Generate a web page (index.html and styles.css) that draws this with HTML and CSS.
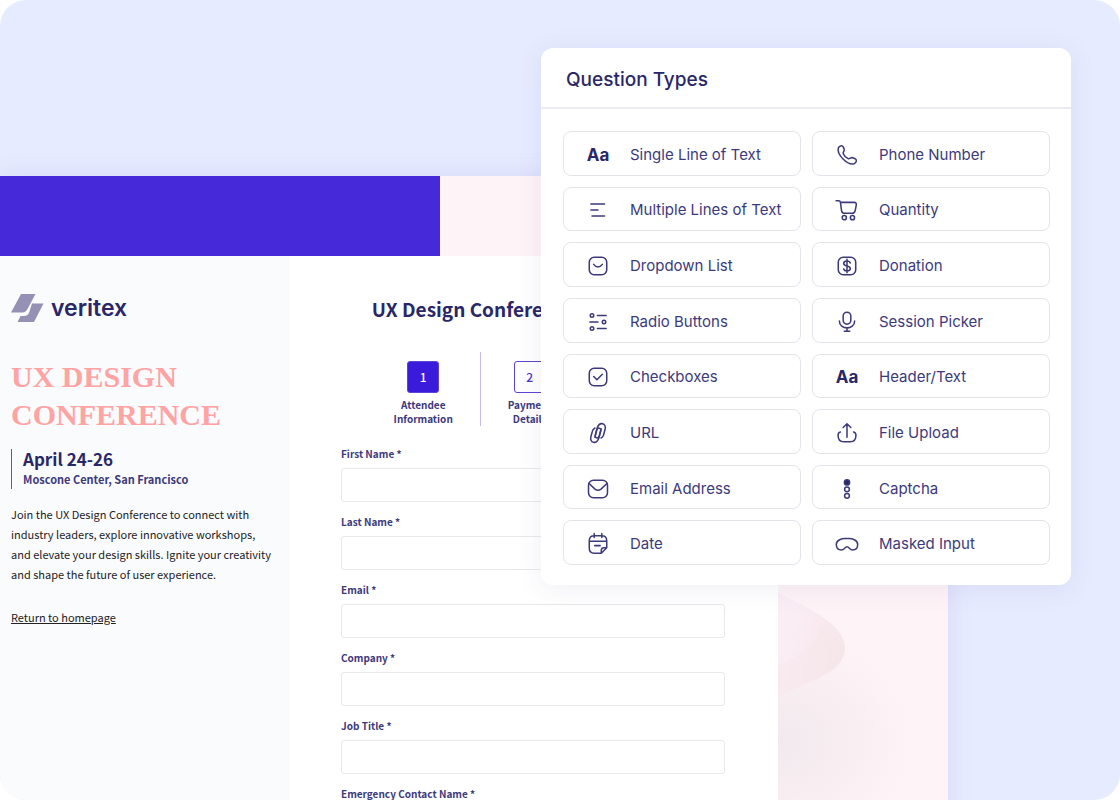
FILE: index.html
```html
<!DOCTYPE html>
<html lang="en">
<head>
  <meta charset="UTF-8">
  <meta name="viewport" content="width=device-width, initial-scale=1.0">
  <title>UX Design Conference - Form Builder</title>
  <link rel="stylesheet" href="styles.css">
</head>
<body>
  <div class="stage">
    <main class="site">
      <div class="banner"></div>
      <div class="site-body">
        <aside class="sidebar">
          <div class="logo">
            <svg width="33" height="28" viewBox="0 0 33 28" aria-hidden="true">
              <path d="M10 0H24.500L16.500 15Q14.500 18.500 11.500 18.500H0Z" fill="#9491b5"/>
              <path d="M21 9.500H32.500L23 28H6.500L9.500 22H13Q16.500 22 18 19Z" fill="#9491b5"/>
            </svg>
            <span>veritex</span>
          </div>
          <h1>UX DESIGN CONFERENCE</h1>
          <div class="event">
            <p class="event-date">April 24-26</p>
            <p class="event-place">Moscone Center, San Francisco</p>
          </div>
          <p class="intro">Join the UX Design Conference to connect with<br>industry leaders, explore innovative workshops,<br>and elevate your design skills. Ignite your creativity<br>and shape the future of user experience.</p>
          <a class="home-link" href="#">Return to homepage</a>
        </aside>

        <form class="register">
          <h2>UX Design Conference Registration</h2>
          <ol class="steps">
            <li class="active"><span class="num">1</span>Attendee<br>Information</li>
            <li><span class="num">2</span>Payment<br>Details</li>
            <li><span class="num">3</span>Order<br>Confirmation</li>
          </ol>
          <div class="field">
            <label for="firstName">First Name *</label>
            <input type="text" id="firstName">
          </div>
          <div class="field">
            <label for="lastName">Last Name *</label>
            <input type="text" id="lastName">
          </div>
          <div class="field">
            <label for="email">Email *</label>
            <input type="email" id="email">
          </div>
          <div class="field">
            <label for="company">Company *</label>
            <input type="text" id="company">
          </div>
          <div class="field">
            <label for="jobTitle">Job Title *</label>
            <input type="text" id="jobTitle">
          </div>
          <div class="field">
            <label for="emergencyContact">Emergency Contact Name *</label>
            <input type="text" id="emergencyContact">
          </div>
        </form>

        <div class="art">
          <svg viewBox="0 0 170 544" preserveAspectRatio="xMinYMin slice" aria-hidden="true">
            <defs>
              <linearGradient id="fold" x1="0" y1="0.300" x2="1" y2="0.600">
                <stop offset="0.200" stop-color="#faedf4"/>
                <stop offset="1" stop-color="#f6e6ea"/>
              </linearGradient>
              <radialGradient id="shade">
                <stop offset="0" stop-color="#f0e9ed"/>
                <stop offset="0.500" stop-color="#f8eef2"/>
                <stop offset="1" stop-color="#fef3f6"/>
              </radialGradient>
            </defs>
            <ellipse cx="0" cy="485" rx="135" ry="110" fill="url(#shade)"/>
            <path d="M0 337C24 349 67 367 67 392C67 416 30 426 0 441Z" fill="url(#fold)"/>
            <path d="M0 409Q35 396 42 372Q55 382 66 386Q70 403 52 417Q30 426 0 441Z" fill="#f6e5e9" opacity="0.400"/>
          </svg>
        </div>
      </div>
    </main>

    <section class="panel">
      <h2>Question Types</h2>
      <div class="types">
        <button type="button">
          <span class="icon aa">Aa</span>
          Single Line of Text
        </button>
        <button type="button">
          <span class="icon"><svg viewBox="0 0 22 22"><path d="M3.200 4.200C4.700 2.200 6.700 2 7.500 3.600L8.400 5.600C9.100 7.200 7 8.200 7.600 9.800C8.300 11.600 10.200 13.500 12 14.300C13.600 15 14.600 12.900 16.200 13.500L18.600 14.500C20.200 15.400 19.800 17.600 17.600 19C12.500 21 0.800 11 3.200 4.200Z"/></svg></span>
          Phone Number
        </button>
        <button type="button">
          <span class="icon"><svg viewBox="0 0 22 22"><path d="M4.500 5.500H17M4.500 11H11M5.500 16.500H17"/></svg></span>
          Multiple Lines of Text
        </button>
        <button type="button">
          <span class="icon"><svg viewBox="0 0 22 22"><path d="M1 2.500H3.500Q4.700 2.500 5 4L6 11.500Q6.300 14 8.800 14H15.500Q18 14 18.500 11.500L19.500 6.500Q19.800 4 17.500 4H5"/><circle cx="8.500" cy="18" r="1.900"/><circle cx="16" cy="18" r="1.900"/></svg></span>
          Quantity
        </button>
        <button type="button">
          <span class="icon"><svg viewBox="0 0 22 22"><rect x="3" y="3" width="16" height="16" rx="4.500"/><path d="M7 9.500Q11 14.500 15 9.500"/></svg></span>
          Dropdown List
        </button>
        <button type="button">
          <span class="icon"><svg viewBox="0 0 22 22"><rect x="3" y="3" width="16" height="16" rx="4.500"/><path d="M11 4.800V17.200M14 8.300Q13.500 6.500 11 6.500Q8 6.500 8 8.700Q8 10.500 11 11Q14 11.500 14 13.300Q14 15.500 11 15.500Q8.500 15.500 8 13.700"/></svg></span>
          Donation
        </button>
        <button type="button">
          <span class="icon"><svg viewBox="0 0 22 22"><circle cx="5.500" cy="5" r="1.600"/><circle cx="16.500" cy="11" r="1.600"/><circle cx="5.500" cy="17" r="1.600"/><path d="M10.500 5H18.500M3.500 11H11M10.500 17H18.500"/></svg></span>
          Radio Buttons
        </button>
        <button type="button">
          <span class="icon"><svg viewBox="0 0 22 22"><rect x="7.500" y="2" width="7" height="11" rx="3.500"/><path d="M4 10C4 18.500 18 18.500 18 10M11 16.400V19.500M8.500 19.500H13.500"/></svg></span>
          Session Picker
        </button>
        <button type="button">
          <span class="icon"><svg viewBox="0 0 22 22"><rect x="3" y="3" width="16" height="16" rx="4.500"/><path d="M7 10.500L10 13.500L15 8.500"/></svg></span>
          Checkboxes
        </button>
        <button type="button">
          <span class="icon aa">Aa</span>
          Header/Text
        </button>
        <button type="button">
          <span class="icon"><svg viewBox="0 0 22 22"><path d="M8.200 14.800L9.800 8.500C10.700 5.300 14.300 6.200 13.500 9.300L11.800 15.500C9.500 22 3 20 4.500 14.500L5.700 9.800C6.100 8 7 7 8.200 6.400"/><path d="M13.800 7.200L12.200 13.500C11.300 16.700 7.700 15.800 8.500 12.700L10.200 6.500C12.500 0 19 2 17.500 7.500L16.300 12.200C15.900 14 15 15 13.800 15.600"/></svg></span>
          URL
        </button>
        <button type="button">
          <span class="icon"><svg viewBox="0 0 22 22"><path d="M11 15V2.500M7.500 6L11 2.500L14.500 6M5 10Q2.800 10.500 2.800 13Q2.800 19 8 19H14Q19.200 19 19.200 13Q19.200 10.500 17 10"/></svg></span>
          File Upload
        </button>
        <button type="button">
          <span class="icon"><svg viewBox="0 0 22 22"><rect x="2.300" y="3" width="17.400" height="16" rx="4.500"/><path d="M2.800 6L8.500 11.300Q11 13 13.500 11.300L19.200 6"/></svg></span>
          Email Address
        </button>
        <button type="button">
          <span class="icon"><svg viewBox="0 0 22 22"><circle class="dot" cx="11" cy="5" r="2.400"/><circle cx="11" cy="11.300" r="2.200"/><circle cx="11" cy="17.300" r="2.200"/></svg></span>
          Captcha
        </button>
        <button type="button">
          <span class="icon"><svg viewBox="0 0 22 22"><path d="M14 19.500H7.500Q3 19.500 3 15V8Q3 3.500 7.500 3.500H14.500Q19 3.500 19 8V14.500L14 19.500V17Q14 14.500 16.500 14.500H19M3 8.500H19M8 12.500H13M7.500 1.500V5M14.500 1.500V5"/></svg></span>
          Date
        </button>
        <button type="button">
          <span class="icon"><svg viewBox="0 0 22 22"><path d="M11 6C16 5.500 20.800 7.500 20.800 11.500C20.800 15 18.500 16.500 16 16.500C13.500 16.500 13 13.500 11 13.500C9 13.500 8.500 16.500 6 16.500C3.500 16.500 1.200 15 1.200 11.500C1.200 7.500 6 5.500 11 6Z"/></svg></span>
          Masked Input
        </button>
      </div>
    </section>
  </div>
</body>
</html>
```

FILE: styles.css
```css
* {
  box-sizing: border-box;
}
body {
  margin: 0;
  background: #fff;
  font-family: "Noto Sans CJK SC", "Noto Sans", sans-serif;
  color: #2a2768;
}
h1, h2, p, ol {
  margin: 0;
  padding: 0;
}
.stage {
  position: relative;
  height: 100vh;
  min-height: 640px;
  padding: 176px 172px 0 0;
  background: #e7ebff;
  border-radius: 26px;
  overflow: hidden;
}
.site {
  background: #fef3f6;
  box-shadow: 0 0 24px rgba(80, 90, 180, 0.12);
}
.banner {
  width: 440px;
  height: 80px;
  background: #4629d8;
}
.site-body {
  display: grid;
  grid-template-columns: 290px 1fr 170px;
}
.sidebar {
  padding: 38px 11px;
  background: #fafbfd;
}
.logo {
  display: flex;
  align-items: center;
  gap: 7px;
  height: 28px;
  font: 600 23px/28px Inter, sans-serif;
}
.sidebar h1 {
  margin-top: 36px;
  font: bold 30px/38px "Liberation Serif", serif;
  color: #ffa3a3;
}
.event {
  margin-top: 15px;
  padding-left: 11px;
  border-left: 1px solid #5f5b9c;
}
.event-date {
  font-size: 17px;
  font-weight: 700;
  line-height: 20px;
}
.event-place {
  font-size: 11px;
  font-weight: 700;
  line-height: 20px;
  color: #3d3a7c;
}
.intro {
  margin-top: 15px;
  font-size: 11px;
  line-height: 20px;
  color: #222;
  white-space: nowrap;
}
.home-link {
  display: inline-block;
  margin-top: 23px;
  font-size: 11px;
  line-height: 20px;
  color: #222;
}
.register {
  padding: 38px 53px 0 51px;
  background: #fff;
}
.register h2 {
  font-size: 19px;
  line-height: 30px;
  text-align: center;
  white-space: nowrap;
}
.steps {
  display: flex;
  justify-content: center;
  margin: 28px 0 20px;
  list-style: none;
}
.steps li {
  padding: 9px 27px 0;
  font-size: 10px;
  font-weight: 700;
  line-height: 14px;
  text-align: center;
  color: #3d3a7c;
}
.steps li + li {
  border-left: 1px solid #c3beee;
}
.num {
  display: block;
  width: 32px;
  height: 32px;
  margin: 0 auto 5px;
  border: 1px solid #5a45d8;
  border-radius: 3px;
  font-size: 12px;
  font-weight: 500;
  line-height: 30px;
  color: #4a35cf;
}
.active .num {
  background: #3a1bdb;
  color: #fff;
}
.field {
  margin-bottom: 12px;
}
.field label {
  display: block;
  margin-bottom: 6px;
  font-size: 10px;
  font-weight: 700;
  line-height: 16px;
  color: #3d3a7c;
}
.field input {
  display: block;
  width: 100%;
  height: 34px;
  border: 1px solid #e9e9ec;
  border-radius: 3px;
  background: #fff;
}
.art svg {
  display: block;
  width: 100%;
}
.panel {
  position: absolute;
  top: 48px;
  right: 49px;
  display: flex;
  flex-direction: column;
  width: 530px;
  min-height: 537px;
  background: #fff;
  border-radius: 12px;
  box-shadow: 0 4px 28px rgba(60, 60, 140, 0.08);
  font-family: Inter, sans-serif;
}
.panel h2 {
  padding: 17px 25px 12px;
  border-bottom: 2px solid #ebecef;
  font-size: 19px;
  font-weight: 500;
  line-height: 30px;
}
.types {
  display: grid;
  flex: 1;
  grid-template-columns: 1fr 1fr;
  grid-auto-rows: 1fr;
  gap: 11px;
  padding: 22px 21px 20px 22px;
}
.types button {
  display: flex;
  align-items: center;
  gap: 16px;
  padding: 3px 0 0 18px;
  border: 1px solid #e3e4e9;
  border-radius: 8px;
  background: #fff;
  font: 400 15px/20px Inter, sans-serif;
  color: #3d3a7c;
}
.icon {
  width: 32px;
  text-align: center;
}
.icon svg {
  display: block;
  width: 24px;
  height: 24px;
  margin: 0 auto;
  fill: none;
  stroke: #3d3a7c;
  stroke-width: 1.400;
  stroke-linecap: round;
  stroke-linejoin: round;
}
.icon .dot {
  fill: #2a2768;
}
.aa {
  font-size: 17px;
  font-weight: 700;
  color: #2a2768;
}
```
